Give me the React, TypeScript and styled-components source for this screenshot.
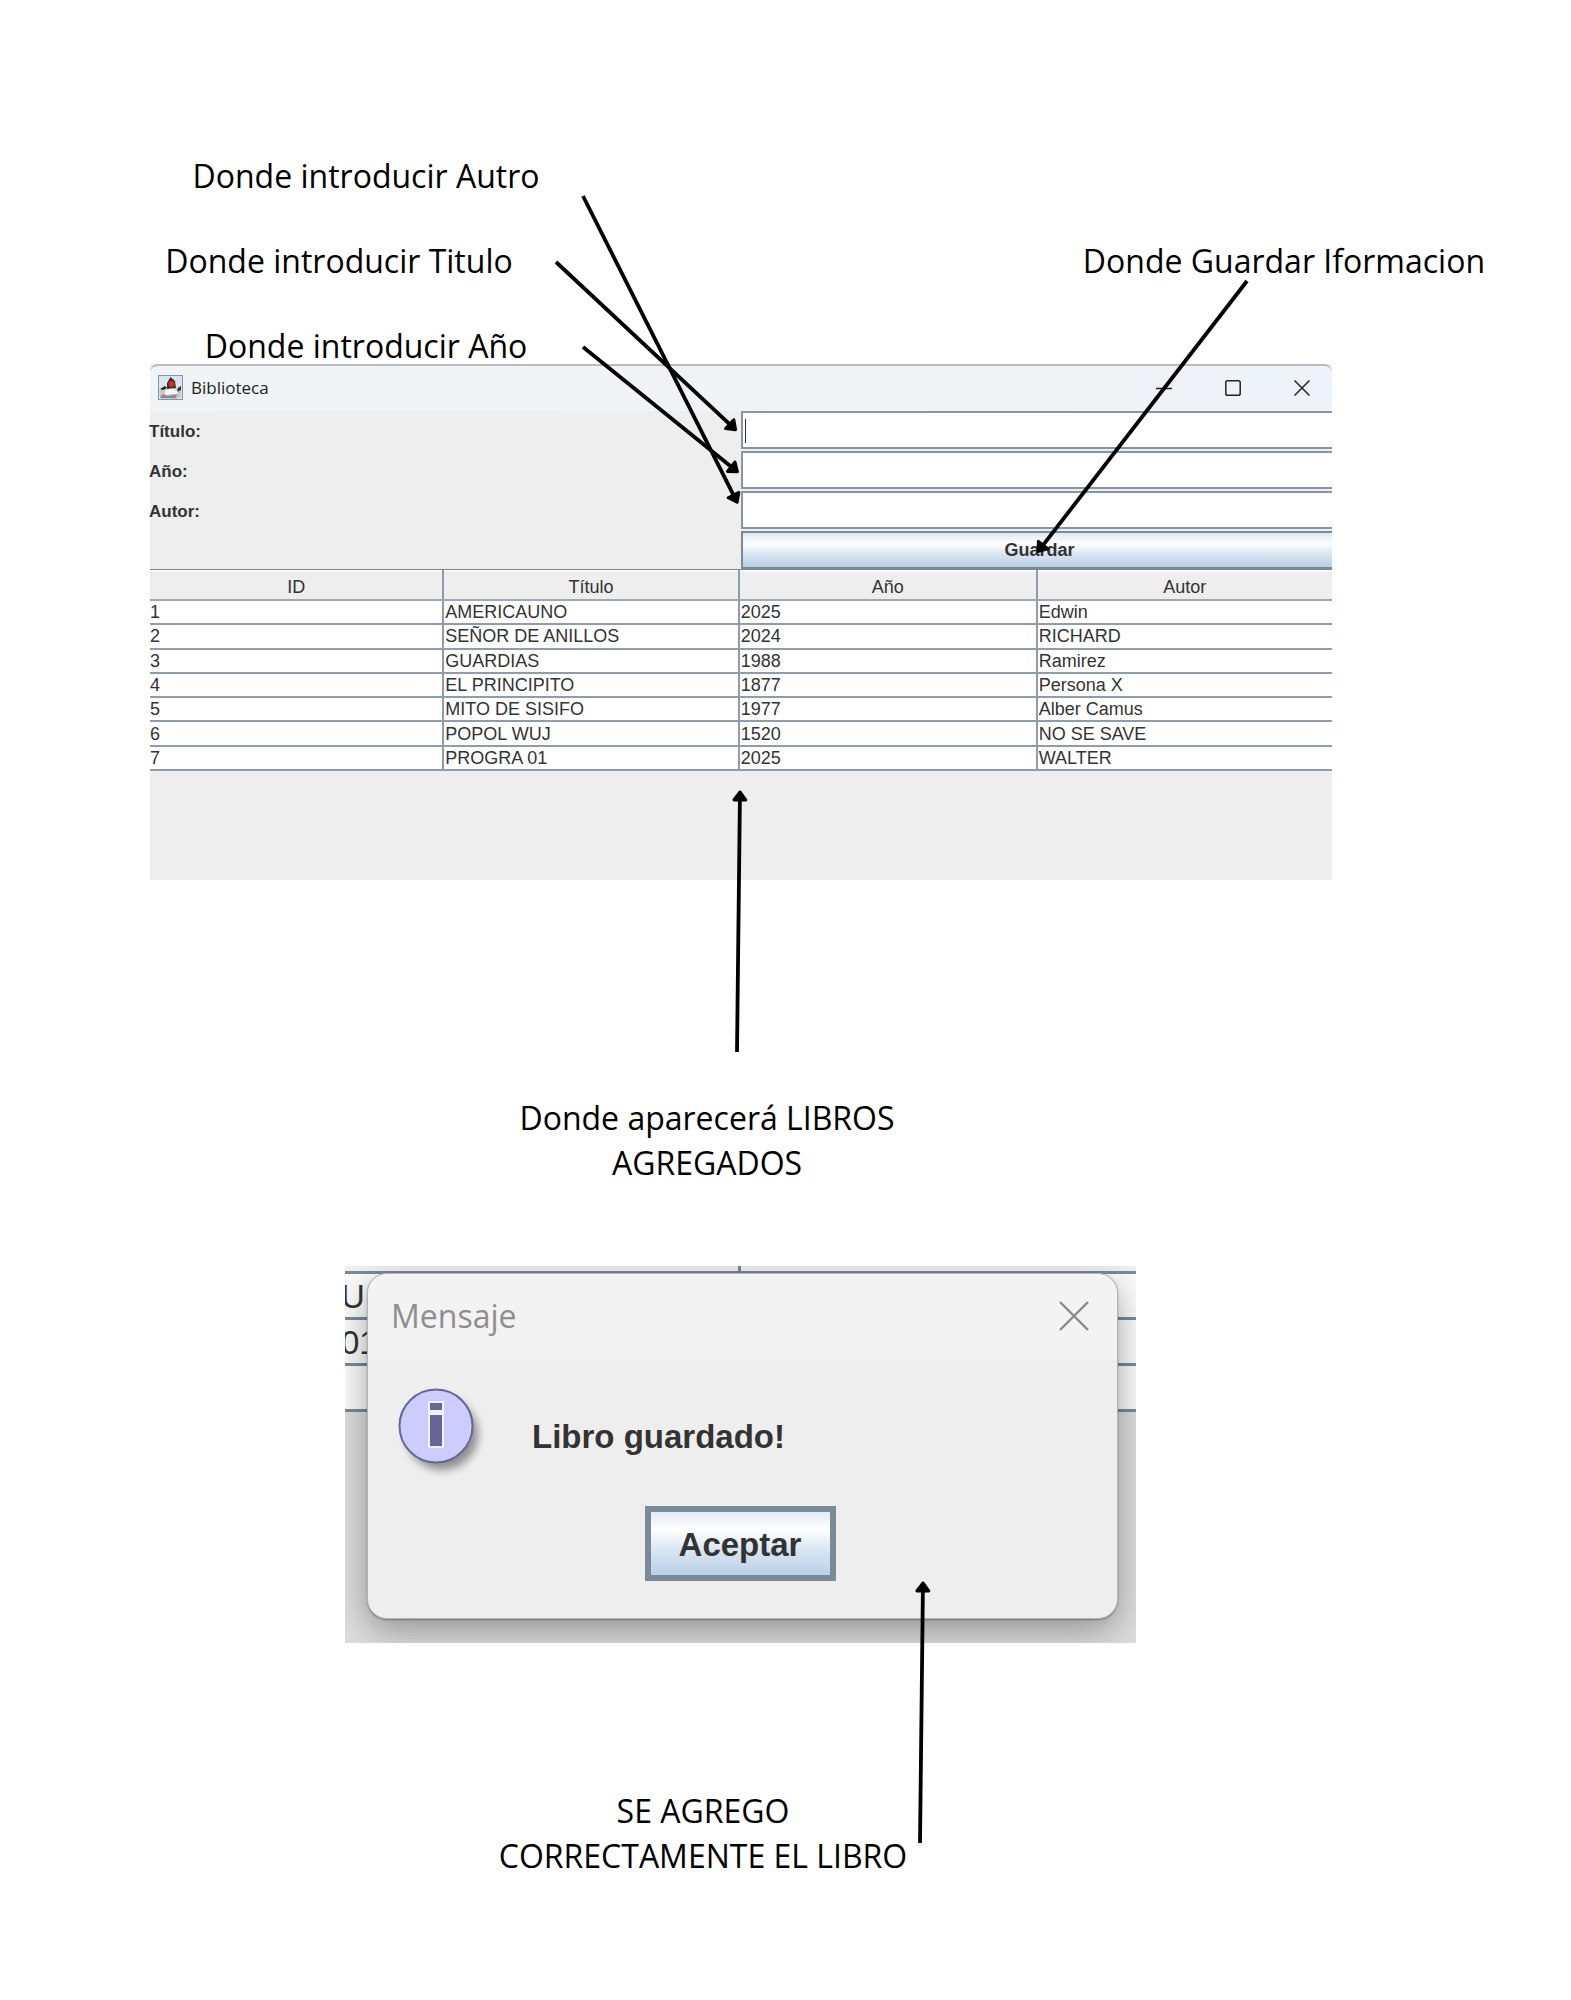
import React from "react";
import styled, { createGlobalStyle } from "styled-components";

const SANS = `"Liberation Sans", Arial, sans-serif`;
const HUMANIST = `"Open Sans", "Noto Sans", sans-serif`;
const LINE = "#7a8a99";

const Global = createGlobalStyle`
  *, *::before, *::after { box-sizing: border-box; }
  body { margin: 0; background: #fff; color: #000; font-family: ${HUMANIST}; }
  h1, h2, p { margin: 0; font-weight: 400; }
  button, input { font: inherit; color: inherit; border-radius: 0; }
`;

const Page = styled.main`
  position: relative;
  padding: 158px 0 122px;
  overflow: hidden;
`;

const Callouts = styled.header`
  display: grid;
  grid-template-columns: 434px 1fr;
  row-gap: 49px;
  padding: 0 86px 0 149px;
  font-size: 32px;
  line-height: 36px;
`;

const Callout = styled.p<{ $shift?: boolean }>`
  grid-column: 1;
  text-align: center;
  white-space: nowrap;
  padding-right: ${(p) => (p.$shift ? "54px" : "0")};
`;

const SaveCallout = styled.p`
  grid-column: 2;
  text-align: right;
  white-space: nowrap;
`;

const AppWindow = styled.section`
  margin: 0 239px 0 150px;
  min-height: 516px;
  background: #eee;
  color: #333;
  font-family: ${SANS};
  font-size: 18px;
`;

const TitleBar = styled.div`
  display: flex;
  align-items: center;
  gap: 8px;
  height: 47px;
  padding: 0 3px 2px 8px;
  border-top: 2px solid #b9bcbe;
  border-top-right-radius: 8px;
  border-top-left-radius: 8px;
  background: linear-gradient(90deg, #f0f4f6 0%, #eff3f5 80%, #edf2fb 100%);
`;

const WindowName = styled.h1`
  flex: 1;
  font-family: ${HUMANIST};
  font-size: 17px;
  line-height: 24px;
  color: #222;
`;

const WindowButtons = styled.div`
  display: flex;
  gap: 15px;
`;

const IconButton = styled.button`
  display: grid;
  place-items: center;
  width: 54px;
  height: 40px;
  padding: 0;
  border: 0;
  background: none;
`;

const Form = styled.form`
  display: grid;
  grid-template-columns: 1fr 1fr;
  grid-template-rows: repeat(4, 38px);
  row-gap: 2px;
`;

const Label = styled.label`
  align-self: center;
  justify-self: start;
  margin-left: -1px;
  padding-top: 3px;
  font-size: 17px;
  font-weight: 700;
  line-height: 24px;
`;

const Field = styled.input<{ $caret?: boolean }>`
  width: 100%;
  height: 38px;
  padding: 0 4px;
  border: solid #8796a5;
  border-width: 2px 0 2px 2px;
  outline: 0;
  background: ${(p) =>
    p.$caret ? "linear-gradient(#333, #333) 2px 6px / 1px 24px no-repeat #fff" : "#fff"};
`;

const SaveButton = styled.button`
  grid-column: 2;
  padding: 0 0 0 4px;
  border: solid ${LINE};
  border-width: 2px 0 2px 2px;
  background: linear-gradient(#dde8f3 0%, #fff 32%, #dbe7f3 60%, #b8cfe5 100%);
  font-weight: 700;
`;

const Books = styled.table`
  width: 100%;
  height: 202px;
  border-collapse: separate;
  border-spacing: 0;
  table-layout: fixed;
  line-height: 20px;
  border-top: 1px solid ${LINE};
`;

const Column = styled.col<{ $share: number }>`
  width: ${(p) => p.$share}%;
`;

const Head = styled.th`
  height: 31px;
  padding: 4px 0 0;
  font-weight: 400;
  background: #eee;
  border-bottom: 2px solid #9ca9b7;
  border-right: 2px solid #8e9cab;
  box-shadow: inset 0 2px #fafafa;
  &:last-child { border-right: 0; }
`;

const Cell = styled.td`
  padding: 0 0 0 1px;
  background: #fff;
  border-bottom: 2px solid #8e9cab;
  border-right: 2px solid #8e9cab;
  &:first-child { padding-left: 0; }
  &:last-child { border-right: 0; }
`;

const Note = styled.p<{ $before: number; $center: number }>`
  width: 430px;
  margin: ${(p) => p.$before}px 0 0 ${(p) => p.$center - 215}px;
  font-size: 32px;
  line-height: 45px;
  text-align: center;
`;

const MessageFigure = styled.section`
  display: grid;
  margin: 81px 435px 0 345px;
  height: 377px;
  overflow: hidden;
  font-family: ${SANS};
  font-size: 33px;
  color: #333;
  > * { grid-area: 1 / 1; min-width: 0; }
`;

const Backdrop = styled.div`
  display: flex;
  flex-direction: column;
  background: #dedede;
`;

const BackHead = styled.div`
  display: grid;
  grid-template-columns: 1fr 1fr;
  height: 8px;
  background: #f0f0f0;
  border-bottom: 3px solid ${LINE};
  > :first-child { border-right: 3px solid ${LINE}; }
`;

const BackRow = styled.div`
  height: 46px;
  padding-top: 3px;
  line-height: 40px;
  text-indent: -4px;
  background: #fbfbfb;
  border-bottom: 3px solid ${LINE};
`;

const Dialog = styled.div`
  display: flex;
  flex-direction: column;
  margin: 7px 18px 24px 22px;
  border: 1px solid #b4b4b4;
  border-radius: 20px;
  background: #eee;
  box-shadow: 0 12px 36px rgba(0, 0, 0, 0.34), 0 1px 2px rgba(0, 0, 0, 0.3);
`;

const DialogBar = styled.div`
  display: flex;
  align-items: center;
  justify-content: space-between;
  height: 86px;
  padding: 0 16px 3px 23px;
  border-radius: 20px 20px 0 0;
  background: #f3f3f3;
  color: #8f8f8f;
`;

const DialogName = styled.h2`
  font-family: ${HUMANIST};
  font-size: 32px;
  line-height: 45px;
`;

const Message = styled.div`
  display: flex;
  align-items: flex-start;
  gap: 46px;
  height: 130px;
  padding: 27px 0 0 28px;
`;

const MessageText = styled.p`
  padding-top: 30px;
  line-height: 40px;
  && { font-weight: 700; }
`;

const AcceptButton = styled.button`
  align-self: center;
  width: 191px;
  height: 75px;
  margin: 16px 5px 0 0;
  padding: 2px 0 0;
  border: 6px solid ${LINE};
  background: linear-gradient(#e3ebf3 0%, #fff 28%, #dbe7f3 58%, #bad0e6 100%);
  font-weight: 700;
`;

const ArrowLayer = styled.svg`
  position: absolute;
  inset: 0;
  width: 100%;
  height: 100%;
  pointer-events: none;
`;

const fields = [
  { id: "titulo", label: "Título:" },
  { id: "anio", label: "Año:" },
  { id: "autor", label: "Autor:" },
];

const columns = [
  { name: "ID", share: 24.9 },
  { name: "Título", share: 25 },
  { name: "Año", share: 25.2 },
  { name: "Autor", share: 24.9 },
];

const books = [
  ["1", "AMERICAUNO", "2025", "Edwin"],
  ["2", "SEÑOR DE ANILLOS", "2024", "RICHARD"],
  ["3", "GUARDIAS", "1988", "Ramirez"],
  ["4", "EL PRINCIPITO", "1877", "Persona X"],
  ["5", "MITO DE SISIFO", "1977", "Alber Camus"],
  ["6", "POPOL WUJ", "1520", "NO SE SAVE"],
  ["7", "PROGRA 01", "2025", "WALTER"],
];

const arrows = [
  [583, 196, 738, 504],
  [556, 262, 737, 431],
  [583, 347, 739, 473],
  [1247, 281, 1037, 553],
  [737, 1052, 740, 790],
  [920, 1843, 923, 1581],
];

function Arrow({ ends }: { ends: number[] }) {
  const [x1, y1, x2, y2] = ends;
  const len = Math.hypot(x2 - x1, y2 - y1);
  const angle = (Math.atan2(y2 - y1, x2 - x1) * 180) / Math.PI;
  return (
    <g transform={`translate(${x2} ${y2}) rotate(${angle})`}>
      <path d={`M${-len} 0H-8`} stroke="#000" strokeWidth="3.8" fill="none" />
      <path
        d="M-2 0L-10 -6V6Z"
        stroke="#000"
        strokeWidth="3"
        strokeLinejoin="round"
      />
    </g>
  );
}

function JavaIcon() {
  return (
    <svg width="25" height="25" viewBox="0 0 25 25" aria-hidden="true">
      <rect x="0.5" y="0.5" width="24" height="24" fill="#dbe4ee" stroke="#7f97b2" />
      <path d="M1 16L8 12L13 15L23 11V22L18 24H3Z" fill="#c9c9c9" />
      <path d="M12.5 2L9 8L9 14L18 13L17 6Z" fill="#333" />
      <path d="M2 14L7 11L9 13L5 15Z" fill="#222" />
      <path d="M20 13L23 11V15L19 17Z" fill="#333" />
      <path d="M7 16C10 13 17 13 20 17L18 21C14 18 11 19 7 21Z" fill="#f4f4f4" />
      <path d="M2 22C5 18 8 20 10 21L19 19L18 23H3Z" fill="#8c8c8c" />
      <circle cx="13.5" cy="9" r="3" fill="#e32619" />
    </svg>
  );
}

function InfoIcon() {
  return (
    <svg width="90" height="90" viewBox="0 0 90 90" aria-hidden="true">
      <defs>
        <filter id="iconShadow" x="-30%" y="-30%" width="170%" height="170%">
          <feGaussianBlur stdDeviation="4" />
        </filter>
      </defs>
      <circle cx="46" cy="47" r="36" fill="#000" opacity="0.4" filter="url(#iconShadow)" />
      <circle cx="40" cy="39" r="36.5" fill="#ccccff" stroke="#666699" strokeWidth="2" />
      <path d="M32 14H48V61H32Z" fill="#f0f0ff" />
      <path d="M34 16H46V23H34ZM34 28H46V59H34Z" fill="#666699" />
    </svg>
  );
}

export default function App() {
  return (
    <>
      <Global />
      <Page>
        <Callouts>
          <Callout>Donde introducir Autro</Callout>
          <Callout $shift>Donde introducir Titulo</Callout>
          <SaveCallout>Donde Guardar Iformacion</SaveCallout>
          <Callout>Donde introducir Año</Callout>
        </Callouts>

        <AppWindow>
          <TitleBar>
            <JavaIcon />
            <WindowName>Biblioteca</WindowName>
            <WindowButtons>
              <IconButton aria-label="Minimizar">
                <svg width="16" height="16" viewBox="0 0 16 16" fill="none" stroke="#222" strokeWidth="1.5">
                  <path d="M0 8.5H16" />
                </svg>
              </IconButton>
              <IconButton aria-label="Maximizar">
                <svg width="16" height="16" viewBox="0 0 16 16" fill="none" stroke="#222" strokeWidth="1.5">
                  <rect x="0.8" y="0.8" width="14.4" height="14.4" rx="1.8" />
                </svg>
              </IconButton>
              <IconButton aria-label="Cerrar">
                <svg width="16" height="16" viewBox="0 0 16 16" fill="none" stroke="#222" strokeWidth="1.5">
                  <path d="M0.5 0.5L15.5 15.5M15.5 0.5L0.5 15.5" />
                </svg>
              </IconButton>
            </WindowButtons>
          </TitleBar>
          <Form onSubmit={(e) => e.preventDefault()}>
            {fields.map((f, i) => (
              <React.Fragment key={f.id}>
                <Label htmlFor={f.id}>{f.label}</Label>
                <Field id={f.id} type="text" $caret={i === 0} />
              </React.Fragment>
            ))}
            <SaveButton type="submit">Guardar</SaveButton>
          </Form>
          <Books>
            <colgroup>
              {columns.map((c) => (
                <Column key={c.name} $share={c.share} />
              ))}
            </colgroup>
            <thead>
              <tr>
                {columns.map((c) => (
                  <Head key={c.name} scope="col">{c.name}</Head>
                ))}
              </tr>
            </thead>
            <tbody>
              {books.map((row) => (
                <tr key={row[0]}>
                  {row.map((value, i) => (
                    <Cell key={i}>{value}</Cell>
                  ))}
                </tr>
              ))}
            </tbody>
          </Books>
        </AppWindow>

        <Note $before={215} $center={707}>
          Donde aparecerá LIBROS
          <br />
          AGREGADOS
        </Note>

        <MessageFigure>
          <Backdrop>
            <BackHead>
              <span />
              <span />
            </BackHead>
            <BackRow>U</BackRow>
            <BackRow>01</BackRow>
            <BackRow />
          </Backdrop>
          <Dialog role="dialog" aria-labelledby="mensaje">
            <DialogBar>
              <DialogName id="mensaje">Mensaje</DialogName>
              <IconButton aria-label="Cerrar mensaje">
                <svg width="30" height="30" viewBox="0 0 30 30" fill="none" stroke="#8a8a8a" strokeWidth="2.4">
                  <path d="M1 1L29 29M29 1L1 29" />
                </svg>
              </IconButton>
            </DialogBar>
            <Message>
              <InfoIcon />
              <MessageText>Libro guardado!</MessageText>
            </Message>
            <AcceptButton type="button">Aceptar</AcceptButton>
          </Dialog>
        </MessageFigure>

        <Note $before={145} $center={703}>
          SE AGREGO
          <br />
          CORRECTAMENTE EL LIBRO
        </Note>

        <ArrowLayer viewBox="0 0 1571 2000" preserveAspectRatio="none" aria-hidden="true">
          {arrows.map((a, i) => (
            <Arrow key={i} ends={a} />
          ))}
        </ArrowLayer>
      </Page>
    </>
  );
}
